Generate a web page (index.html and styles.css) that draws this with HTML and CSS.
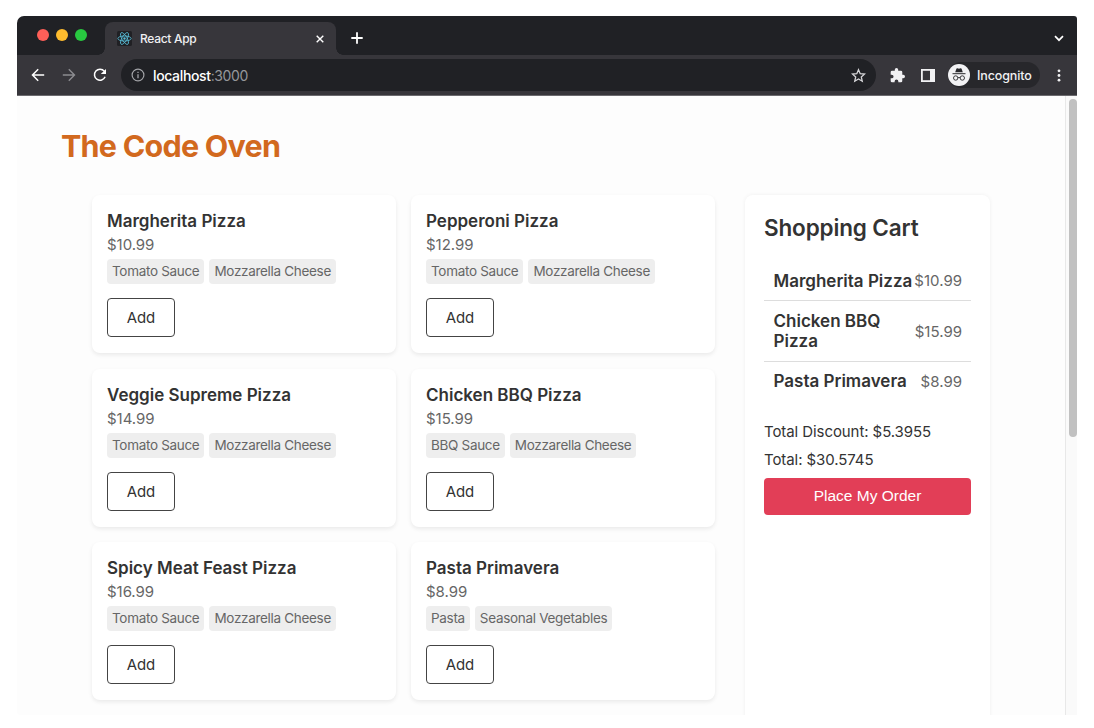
FILE: index.html
```html
<!DOCTYPE html>
<html lang="en">
<head>
<meta charset="utf-8">
<title>React App</title>
<link rel="stylesheet" href="styles.css">
</head>
<body>
<div class="window">
  <header class="tabstrip">
    <div class="lights"><i class="light red"></i><i class="light yellow"></i><i class="light green"></i></div>
    <div class="tab">
      <svg class="favicon" viewBox="0 0 14 14"><rect width="14" height="14" rx="1.5" fill="#202024"/><g fill="none" stroke="#58bcd6" stroke-width=".8"><ellipse cx="7" cy="7" rx="6.2" ry="2.4"/><ellipse cx="7" cy="7" rx="6.2" ry="2.4" transform="rotate(60 7 7)"/><ellipse cx="7" cy="7" rx="6.2" ry="2.4" transform="rotate(120 7 7)"/></g><circle cx="7" cy="7" r="1.1" fill="#58bcd6"/></svg>
      <span class="tab-title">React App</span>
      <svg class="tab-close" viewBox="0 0 8 8"><path d="M.7.7l6.6 6.6M7.3.7L.7 7.3" stroke="#fff" stroke-width="1.4"/></svg>
    </div>
    <svg class="plus" viewBox="0 0 12 12"><path d="M6 .3v11.4M.3 6h11.4" stroke="#fff" stroke-width="1.8"/></svg>
    <svg class="chevron" viewBox="0 0 10 7"><path d="M1 1.2l4 4 4-4" fill="none" stroke="#fff" stroke-width="1.7"/></svg>
  </header>
  <nav class="toolbar">
    <svg class="nav-icon" viewBox="0 0 14 14"><path d="M13.2 7H1.8M7.2 1.3L1.5 7l5.7 5.7" fill="none" stroke="#fff" stroke-width="1.5"/></svg>
    <svg class="nav-icon" viewBox="0 0 14 14"><path d="M.8 7h11.4M6.8 1.3L12.5 7l-5.7 5.7" fill="none" stroke="#8c8c90" stroke-width="1.4"/></svg>
    <svg class="nav-icon" viewBox="0 0 14 14"><path d="M11.3 3.3A5.5 5.5 0 1 0 12.1 8.8" fill="none" stroke="#fff" stroke-width="1.5"/><path d="M13 .9v5.2H7.800z" fill="#fff"/></svg>
    <div class="address">
      <svg class="info" viewBox="0 0 14 14"><circle cx="7" cy="7" r="5.9" fill="none" stroke="#a2a3a7" stroke-width="1.2"/><path d="M7 6.2v4M7 3.7v1.4" stroke="#a2a3a7" stroke-width="1.3"/></svg>
      <span class="url">localhost<span class="port">:3000</span></span>
      <svg class="star" viewBox="0 0 14 14"><path d="M7 1.6l1.6 3.7 4 .4-3 2.7.9 3.9L7 10.2l-3.5 2.1.9-3.900-3-2.700 4-.4z" fill="none" stroke="#d6d6d9" stroke-width="1.2"/></svg>
    </div>
    <svg class="puzzle" viewBox="1 1 22 22"><path d="M20.5 11H19V7a2 2 0 0 0-2-2h-4V3.5a2.5 2.5 0 0 0-5 0V5H4a2 2 0 0 0-2 2v3.8h1.5a2.7 2.7 0 0 1 0 5.4H2V20a2 2 0 0 0 2 2h3.800v-1.500a2.700 2.700 0 0 1 5.400 0V22H17a2 2 0 0 0 2-2v-4h1.500a2.500 2.500 0 0 0 0-5z" fill="#f1f1f3"/></svg>
    <svg class="panel-icon" viewBox="0 0 14 13"><rect x=".9" y=".9" width="12.2" height="11.2" fill="none" stroke="#f1f1f3" stroke-width="1.8"/><path d="M9 1h4v11H9z" fill="#f1f1f3"/></svg>
    <div class="incognito">
      <svg class="spy" viewBox="0 0 22 22"><circle cx="11" cy="11" r="11" fill="#f2f2f4"/><path d="M7.2 8.3L8.4 4.8q.3-.7 1-.5l1.600.4 1.600-.4q.7-.2 1 .5l1.200 3.500z" fill="#29292d"/><path d="M4.500 9.700h13" stroke="#29292d" stroke-width="1"/><g fill="none" stroke="#29292d" stroke-width=".9"><circle cx="7.7" cy="14" r="2.2"/><circle cx="14.3" cy="14" r="2.2"/><path d="M9.900 13.800q1.100-.8 2.200 0"/></g></svg>
      <span>Incognito</span>
    </div>
    <svg class="dots" viewBox="0 0 4 13"><g fill="#f1f1f3"><circle cx="2" cy="1.8" r="1.4"/><circle cx="2" cy="6.5" r="1.4"/><circle cx="2" cy="11.2" r="1.4"/></g></svg>
  </nav>
  <div class="viewport">
    <main class="page">
      <h1 class="brand">The Code Oven</h1>
      <div class="layout">
        <section class="menu">
          <article class="card"><h3 class="name">Margherita Pizza</h3><p class="price">$10.99</p><div class="tags"><span class="tag">Tomato Sauce</span><span class="tag">Mozzarella Cheese</span></div><button class="add">Add</button></article>
          <article class="card"><h3 class="name">Pepperoni Pizza</h3><p class="price">$12.99</p><div class="tags"><span class="tag">Tomato Sauce</span><span class="tag">Mozzarella Cheese</span></div><button class="add">Add</button></article>
          <article class="card"><h3 class="name">Veggie Supreme Pizza</h3><p class="price">$14.99</p><div class="tags"><span class="tag">Tomato Sauce</span><span class="tag">Mozzarella Cheese</span></div><button class="add">Add</button></article>
          <article class="card"><h3 class="name">Chicken BBQ Pizza</h3><p class="price">$15.99</p><div class="tags"><span class="tag">BBQ Sauce</span><span class="tag">Mozzarella Cheese</span></div><button class="add">Add</button></article>
          <article class="card"><h3 class="name">Spicy Meat Feast Pizza</h3><p class="price">$16.99</p><div class="tags"><span class="tag">Tomato Sauce</span><span class="tag">Mozzarella Cheese</span></div><button class="add">Add</button></article>
          <article class="card"><h3 class="name">Pasta Primavera</h3><p class="price">$8.99</p><div class="tags"><span class="tag">Pasta</span><span class="tag">Seasonal Vegetables</span></div><button class="add">Add</button></article>
        </section>
        <aside class="cart">
          <h2 class="cart-title">Shopping Cart</h2>
          <ul class="items">
            <li class="item"><span class="item-name">Margherita Pizza</span><span class="item-price">$10.99</span></li>
            <li class="item"><span class="item-name">Chicken BBQ<br>Pizza</span><span class="item-price">$15.99</span></li>
            <li class="item"><span class="item-name">Pasta Primavera</span><span class="item-price">$8.99</span></li>
          </ul>
          <p class="total">Total Discount: $5.3955</p>
          <p class="total">Total: $30.5745</p>
          <button class="order">Place My Order</button>
        </aside>
      </div>
    </main>
    <div class="scrollbar"><div class="thumb"></div></div>
  </div>
</div>
</body>
</html>
```
FILE: styles.css
```css
* { box-sizing: border-box; margin: 0; padding: 0; }
body { background: #fff; font-family: Inter, sans-serif; color: #333; padding: 16px 17px 13px; height: 728px; overflow: hidden; }
svg { display: block; flex: none; }
.window { width: 1060px; height: 699px; display: flex; flex-direction: column; overflow: hidden; border-radius: 7px 3px 0 3px; background: #fdfdfd; }
.tabstrip { height: 39px; background: #202125; display: flex; align-items: center; padding: 6px 13px 0 20px; flex: none; }
.lights { display: flex; gap: 7px; width: 68px; margin-top: -7px; }
.light { width: 12px; height: 12px; border-radius: 50%; }
.red { background: #fe5f58; }
.yellow { background: #febc2e; }
.green { background: #28c840; }
.tab { position: relative; width: 231px; height: 33px; background: #37363b; border-radius: 8px 8px 0 0; display: flex; align-items: center; padding: 0 12px; }
/* Flared feet where the active tab meets the toolbar */
.tab::before, .tab::after { content: ""; position: absolute; bottom: 0; width: 7px; height: 7px; }
.tab::before { left: -7px; background: radial-gradient(circle at 0 0, transparent 6.5px, #37363b 7px); }
.tab::after { right: -7px; background: radial-gradient(circle at 100% 0, transparent 6.5px, #37363b 7px); }
.favicon { width: 15px; height: 15px; }
.tab-title { flex: 1; margin-left: 8px; font-size: 12px; font-weight: 500; letter-spacing: -.3px; color: #f0f0f2; }
.tab-close { width: 8px; height: 8px; }
.plus { width: 12px; height: 12px; margin-left: 15px; margin-bottom: 1px; }
.chevron { width: 10px; height: 7px; margin-left: auto; }
.toolbar { height: 41px; flex: none; background: #37363b; border-bottom: 1px solid #6b6a6e; display: flex; align-items: center; padding: 0 16px 0 14px; }
.nav-icon { width: 14px; height: 14px; margin-right: 17px; }
.address { width: 755px; height: 32px; margin-left: -3px; border-radius: 16px; background: #202125; display: flex; align-items: center; padding: 0 10px; }
.info { width: 14px; height: 14px; }
.url { flex: 1; margin-left: 8px; font-size: 14px; font-weight: 500; letter-spacing: -.36px; color: #fff; }
.port { color: #96979b; font-weight: 400; }
.star { width: 15px; height: 15px; }
.puzzle { width: 15px; height: 15px; margin-left: 14px; }
.panel-icon { width: 14px; height: 13px; margin-left: 16px; }
.incognito { margin-left: 13px; width: 92px; height: 26px; border-radius: 13px; background: #27272b; display: flex; align-items: center; gap: 7px; font-size: 12.5px; font-weight: 500; letter-spacing: -.12px; color: #f0f0f2; white-space: nowrap; }
.spy { width: 22px; height: 22px; }
.dots { width: 4px; height: 13px; margin-left: auto; }
.viewport { flex: 1; min-height: 0; display: flex; background: #fdfdfd; }
.page { flex: 1; padding: 31px 45px 0; overflow: hidden; }
.brand { margin-left: -1px; font-size: 30.5px; line-height: 38px; font-weight: 700; letter-spacing: -.75px; color: #d2691e; white-space: nowrap; }
.layout { display: flex; align-items: flex-start; gap: 30px; padding: 30px 30px 0; }
.menu { display: grid; grid-template-columns: 304px 304px; grid-auto-rows: 158px; gap: 15.5px 15px; }
.card { background: #fff; border-radius: 8px; box-shadow: 0 2px 4px rgba(0,0,0,.08); padding: 15px; }
.name { padding-top: 1px; font-size: 17px; line-height: 21px; font-weight: 600; white-space: nowrap; }
.price { margin-top: 3px; font-size: 15px; line-height: 20px; letter-spacing: -.05px; color: #666; }
.tags { margin-top: 4px; display: flex; gap: 5px; }
.tag { height: 25px; line-height: 25px; padding: 0 5px; border-radius: 4px; background: #eee; font-size: 13.5px; letter-spacing: -.31px; color: #666; white-space: nowrap; }
.add { display: block; margin-top: 14px; width: 68px; height: 39px; border: 1px solid #444; border-radius: 4px; background: #fff; font: 400 15px Inter, sans-serif; letter-spacing: -.1px; color: #333; }
.cart { width: 246px; height: 600px; background: #fff; border-radius: 8px; box-shadow: 0 0 4px rgba(0,0,0,.06); padding: 19px; }
.cart-title { font-size: 22.5px; line-height: 28px; font-weight: 600; letter-spacing: -.15px; white-space: nowrap; }
.items { list-style: none; margin-top: 19px; }
.item { display: flex; align-items: center; justify-content: space-between; padding: 9.5px 9px 9px 9.5px; border-bottom: 1px solid #ddd; white-space: nowrap; }
.item:last-child { border-bottom: 0; }
.item-name { font-size: 17px; line-height: 20.5px; font-weight: 600; }
.item-price { font-size: 15px; color: #666; }
.total { font-size: 15px; line-height: 20px; letter-spacing: -.08px; white-space: nowrap; margin-top: 8px; }
.items + .total { margin-top: 21px; }
.order { display: block; width: 207px; height: 37px; margin-top: 8px; border: 0; border-radius: 4px; background: #e23e57; color: #fff; font: 400 15.5px "Liberation Sans", sans-serif; }
.scrollbar { width: 12px; background: #fafafa; border-left: 1px solid #e8e8e8; padding: 3px 0 0 3px; }
.thumb { width: 8px; height: 338px; border-radius: 4px; background: #c1c1c1; }
```
